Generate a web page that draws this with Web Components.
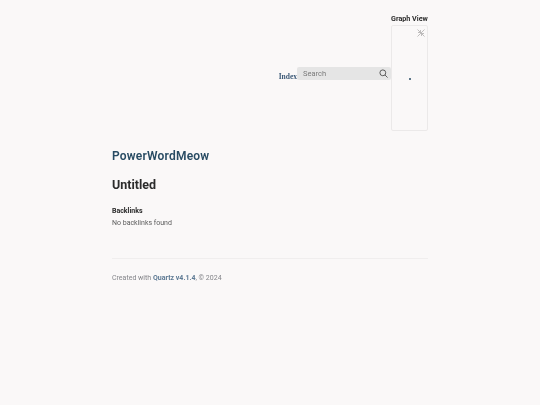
<!DOCTYPE html>
<html>
<head>
<meta charset="utf-8">
<title>PowerWordMeow</title>
<style>
  html, body { margin: 0; background: #faf8f8; }
  body { font-family: Roboto, sans-serif; color: #4e4e4e; }
</style>
</head>
<body>
<quartz-page>
  <top-bar slot="top"></top-bar>
  <page-title slot="title">PowerWordMeow</page-title>
  <article-title slot="article">Untitled</article-title>
  <back-links slot="backlinks"></back-links>
  <page-footer slot="footer"></page-footer>
</quartz-page>

<script>
class QuartzPage extends HTMLElement {
  constructor() {
    super();
    const shadow = this.attachShadow({ mode: 'open' });
    shadow.innerHTML = `
      <style>
      /* own layer, so the text gets grey antialiasing like the reference */
      :host { display: block; width: 316px; margin: 0 auto; padding-top: 12px; height: 393px; transform: translateZ(0); }
      .titles { display: flex; flex-direction: column; padding-top: 17px; }
      </style>
      <slot name="top"></slot>
      <div class="titles">
        <slot name="title"></slot>
        <slot name="article"></slot>
        <slot name="backlinks"></slot>
        <slot name="footer"></slot>
      </div>
    `;
  }
}

class TopBar extends HTMLElement {
  constructor() {
    super();
    const shadow = this.attachShadow({ mode: 'open' });
    shadow.innerHTML = `
      <style>
      :host { display: flex; justify-content: flex-end; align-items: center; }
      .index {
        font-family: "Liberation Serif", serif; font-size: 7.5px; font-weight: 700;
        color: #3d5a78; align-self: center; padding-top: 10px;
      }
      .search {
        width: 94px; height: 13px; box-sizing: border-box; padding: 0 3px 0 6px;
        margin-top: 3px; background: #e5e5e5; border-radius: 2px;
        display: flex; align-items: center; justify-content: space-between;
        font-size: 7.5px; color: #7b7b7b;
      }
      .search svg { width: 9px; height: 9px; display: block; }
      .graph { width: 37px; display: flex; flex-direction: column; }
      h3 {
        margin: 1px 0 1px; font-size: 7.2px; line-height: 11px; font-weight: 700;
        color: #2b2b2b; white-space: nowrap;
      }
      .box {
        height: 106px; box-sizing: border-box; border: 1px solid #ebe9e9; border-radius: 2px;
        display: flex; align-items: center; justify-content: center; position: relative;
      }
      .dot { width: 2px; height: 2px; border-radius: 50%; background: #284b63; margin: 1px 0 0 0; }
      .box svg { position: absolute; top: 2px; right: 1px; width: 10px; height: 10px; }
      </style>
      <span class="index">Index</span>
      <div class="search">
        <span>Search</span>
        <svg viewBox="0 0 20 20" fill="none" stroke="#4e4e4e" stroke-width="2">
          <circle cx="8.5" cy="8.5" r="6.5"></circle>
          <path d="M13.5 13.5 L19 19"></path>
        </svg>
      </div>
      <div class="graph">
        <h3>Graph View</h3>
        <div class="box">
          <svg viewBox="0 0 20 20" fill="none" stroke="#b8b6b6" stroke-width="1.8">
            <path d="M3 3 L17 17 M17 3 L3 17"></path>
            <path d="M4 9 H9 V4 M11 16 V11 H16"></path>
          </svg>
          <div class="dot"></div>
        </div>
      </div>
    `;
  }
}

class PageTitle extends HTMLElement {
  constructor() {
    super();
    const shadow = this.attachShadow({ mode: 'open' });
    shadow.innerHTML = `
      <style>
      :host { display: block; font-size: 12px; line-height: 16px; font-weight: 600; color: #284b63; letter-spacing: 0.2px; }
      </style>
      <slot></slot>
    `;
  }
}

class ArticleTitle extends HTMLElement {
  constructor() {
    super();
    const shadow = this.attachShadow({ mode: 'open' });
    shadow.innerHTML = `
      <style>
      :host { display: block; margin-top: 13px; font-size: 12.5px; line-height: 16px; font-weight: 700; color: #2b2b2b; }
      </style>
      <slot></slot>
    `;
  }
}

class BackLinks extends HTMLElement {
  constructor() {
    super();
    const shadow = this.attachShadow({ mode: 'open' });
    shadow.innerHTML = `
      <style>
      :host { display: block; margin-top: 13px; font-size: 7px; line-height: 11px; }
      h3 { margin: 0 0 1px; font-size: 7px; line-height: 11px; font-weight: 700; color: #2b2b2b; }
      p { margin: 0; color: #5c5c5c; }
      </style>
      <h3>Backlinks</h3>
      <p>No backlinks found</p>
    `;
  }
}

class PageFooter extends HTMLElement {
  constructor() {
    super();
    const shadow = this.attachShadow({ mode: 'open' });
    shadow.innerHTML = `
      <style>
      :host { display: block; margin-top: 29px; border-top: 1px solid #f0eeee; padding-top: 14px; font-size: 7px; line-height: 10px; color: #84858a; }
      a { color: #5e7a94; font-weight: 700; text-decoration: none; }
      </style>
      Created with <a>Quartz v4.1.4</a>, © 2024
    `;
  }
}

customElements.define('quartz-page', QuartzPage);
customElements.define('top-bar', TopBar);
customElements.define('page-title', PageTitle);
customElements.define('article-title', ArticleTitle);
customElements.define('back-links', BackLinks);
customElements.define('page-footer', PageFooter);
</script>
</body>
</html>
